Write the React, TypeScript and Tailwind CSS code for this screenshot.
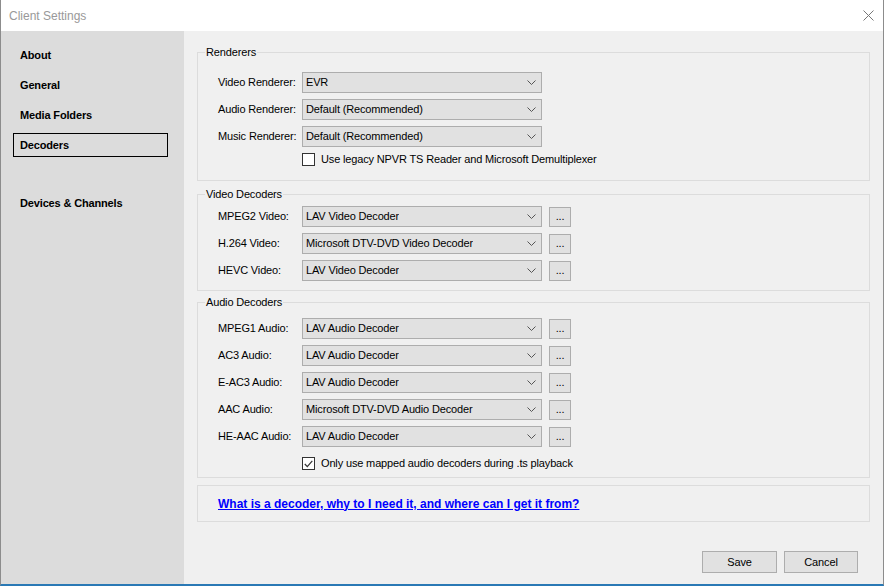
import React from "react"

const font = { fontFamily: '"Liberation Sans", Arial, sans-serif' }

const Chevron = () => (
  <svg width="9" height="5" viewBox="0 0 9 5" className="shrink-0">
    <path d="M0.5 0.5 L4.5 4.5 L8.5 0.5" fill="none" stroke="#555" strokeWidth="1" />
  </svg>
)

const Combo = ({ value }: { value: string }) => (
  <div className="w-[240px] h-[21px] bg-[#e1e1e1] border border-[#adadad] flex items-center justify-between pl-[3px] pr-[5px]">
    <span className="truncate">{value}</span>
    <Chevron />
  </div>
)

const Dots = () => (
  <div className="w-[22px] h-[20px] bg-[#e1e1e1] border border-[#adadad] flex items-end justify-center pb-[4px] leading-none">
    ...
  </div>
)

const CheckBox = ({ checked, label }: { checked?: boolean; label: string }) => (
  <div className="flex items-center h-[13px]">
    <div className="w-[13px] h-[13px] bg-white border border-[#333] flex items-center justify-center">
      {checked && (
        <svg width="9" height="8" viewBox="0 0 9 8">
          <path d="M0.8 4 L3.3 6.6 L8.3 0.8" fill="none" stroke="#333" strokeWidth="1.2" />
        </svg>
      )}
    </div>
    <span className="ml-[6px]">{label}</span>
  </div>
)

const Row = ({ label, value, dots }: { label: string; value: string; dots?: boolean }) => (
  <div className="flex items-center h-[21px]">
    <span className="w-[84px] shrink-0">{label}</span>
    <Combo value={value} />
    {dots && <div className="ml-[7px]"><Dots /></div>}
  </div>
)

const Group = ({ title, className, children }: { title: string; className?: string; children: React.ReactNode }) => (
  <fieldset className={`border border-[#dcdcdc] ${className ?? ""}`}>
    <legend className="ml-[7px] px-[1px] h-[16px] leading-[16px]">{title}</legend>
    <div className="pl-[20px]">{children}</div>
  </fieldset>
)

export default function App() {
  const nav = ["About", "General", "Media Folders"]
  return (
    <div
      style={font}
      className="w-[884px] h-[586px] flex flex-col border-x border-[#8c8c8c] border-b-2 border-b-[#2a79b5] text-[11px] tracking-[-0.15px] text-black overflow-hidden"
    >
      {/* title bar */}
      <div className="h-[31px] bg-white flex items-center justify-between pl-[8px] pr-[9px] shrink-0">
        <span className="text-[12px] tracking-normal text-[#999]">Client Settings</span>
        <svg width="11" height="11" viewBox="0 0 11 11">
          <path d="M0.5 0.5 L10.5 10.5 M10.5 0.5 L0.5 10.5" stroke="#777" strokeWidth="1" />
        </svg>
      </div>

      <div className="flex flex-1 min-h-0">
        {/* sidebar */}
        <div className="w-[183px] bg-[#dcdcdc] flex flex-col pt-[12px] px-[12px] font-bold">
          {nav.map(n => (
            <div key={n} className="h-[24px] w-[155px] flex items-center pl-[7px] mb-[6px]">
              {n}
            </div>
          ))}
          <div className="h-[24px] w-[155px] flex items-center pl-[6px] border border-black">Decoders</div>
          <div className="h-[24px] w-[155px] flex items-center pl-[7px] mt-[34px]">Devices &amp; Channels</div>
        </div>

        {/* content */}
        <div className="flex-1 bg-[#f0f0f0] flex flex-col px-[13px] pt-[13px] pb-[11px]">
          <Group title="Renderers" className="pb-[14px]">
            <div className="flex flex-col gap-[6px] mt-[12px]">
              <Row label="Video Renderer:" value="EVR" />
              <Row label="Audio Renderer:" value="Default (Recommended)" />
              <Row label="Music Renderer:" value="Default (Recommended)" />
            </div>
            <div className="ml-[84px] mt-[6px]">
              <CheckBox label="Use legacy NPVR TS Reader and Microsoft Demultiplexer" />
            </div>
          </Group>

          <Group title="Video Decoders" className="pb-[9px] mt-[5px]">
            <div className="flex flex-col gap-[6px] mt-[4px]">
              <Row label="MPEG2 Video:" value="LAV Video Decoder" dots />
              <Row label="H.264 Video:" value="Microsoft DTV-DVD Video Decoder" dots />
              <Row label="HEVC Video:" value="LAV Video Decoder" dots />
            </div>
          </Group>

          <Group title="Audio Decoders" className="pb-[7px] mt-[3px]">
            <div className="flex flex-col gap-[6px] mt-[8px]">
              <Row label="MPEG1 Audio:" value="LAV Audio Decoder" dots />
              <Row label="AC3 Audio:" value="LAV Audio Decoder" dots />
              <Row label="E-AC3 Audio:" value="LAV Audio Decoder" dots />
              <Row label="AAC Audio:" value="Microsoft DTV-DVD Audio Decoder" dots />
              <Row label="HE-AAC Audio:" value="LAV Audio Decoder" dots />
            </div>
            <div className="ml-[84px] mt-[10px]">
              <CheckBox checked label="Only use mapped audio decoders during .ts playback" />
            </div>
          </Group>

          <div className="mt-[7px] h-[37px] border border-[#dcdcdc] flex items-center pl-[20px]">
            <a href="#" className="font-bold text-[12px] tracking-normal text-[#0000ff] underline">
              What is a decoder, why to I need it, and where can I get it from?
            </a>
          </div>

          <div className="mt-auto flex justify-end gap-[7px] pr-[12px]">
            <button className="w-[75px] h-[22px] bg-[#e1e1e1] border border-[#adadad]">Save</button>
            <button className="w-[74px] h-[22px] bg-[#e1e1e1] border border-[#adadad]">Cancel</button>
          </div>
        </div>
      </div>
    </div>
  )
}
